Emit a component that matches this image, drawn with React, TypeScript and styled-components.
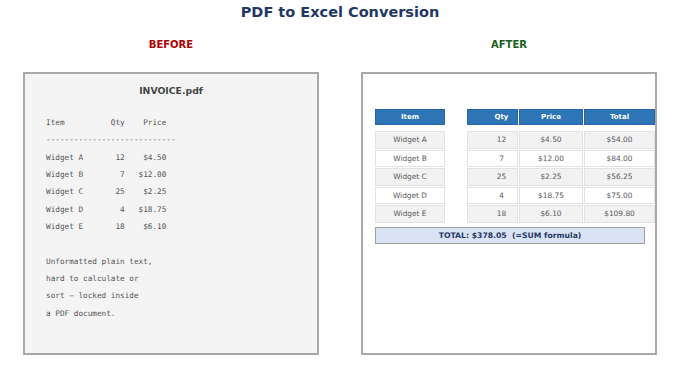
import React from 'react';
import styled, { createGlobalStyle } from 'styled-components';

const GlobalStyle = createGlobalStyle`
    html, body {
        margin: 0;
        padding: 0;
        background: #FFFFFF;
        font-family: "DejaVu Sans", "Liberation Sans", sans-serif;
    }
`;

const Page = styled.main`
    width: 680px;
    height: 377px;
    overflow: hidden;
`;

const Title = styled.h1`
    margin: 0;
    height: 24px;
    line-height: 24px;
    text-align: center;
    font-size: 14.5px;
    font-weight: bold;
    color: #1F3864;
`;

const Columns = styled.div`
    display: grid;
    grid-template-columns: 296px 296px;
    column-gap: 42px;
    padding-left: 23px;
`;

const SideLabel = styled.div<{ $tone: string }>`
    margin-top: 14px;
    height: 14px;
    line-height: 14px;
    text-align: center;
    font-size: 10px;
    font-weight: bold;
    color: ${p => p.$tone};
`;

const Panel = styled.section<{ $shade?: boolean }>`
    box-sizing: border-box;
    margin-top: 20px;
    height: 283px;
    border: 2px solid #A8A8A8;
    background-color: ${p => (p.$shade ? '#F4F4F4' : '#FFFFFF')};
`;

const PdfPanel = styled(Panel)`
    padding: 9px 0 0 21px;
`;

const FileName = styled.h2`
    margin: 0 0 0 -21px;
    height: 16px;
    line-height: 16px;
    text-align: center;
    font-size: 9.3px;
    font-weight: bold;
    color: #444444;
`;

const PlainText = styled.pre`
    margin: 15px 0 0;
    font-family: "DejaVu Sans Mono", "Liberation Mono", monospace;
    font-size: 7.7px;
    line-height: 17.33px;
    color: #555555;
`;

const SheetPanel = styled(Panel)`
    padding: 35px 0 0 12px;
`;

const Sheet = styled.div`
    display: flex;
    flex-direction: column;
    gap: 1px;
    width: 282px;
`;

const Row = styled.div<{ $head?: boolean }>`
    display: grid;
    grid-template-columns: 71px 21px 52px 65px 72px;
    height: ${p => (p.$head ? '16px' : '17.5px')};
    margin-bottom: ${p => (p.$head ? '5px' : '0')};
`;

const Cell = styled.div<{ $head?: boolean; $alt?: boolean; $indent?: number }>`
    box-sizing: border-box;
    display: flex;
    align-items: center;
    justify-content: center;
    padding-left: ${p => p.$indent ?? 0}px;
    margin-right: 1px;
    font-size: ${p => (p.$head ? '7px' : '7.4px')};
    font-weight: ${p => (p.$head ? 'bold' : 'normal')};
    color: ${p => (p.$head ? '#FFFFFF' : '#595959')};
    background-color: ${p => (p.$head ? '#2E75B6' : p.$alt ? '#F2F2F2' : '#FFFFFF')};
    border: 1px solid ${p => (p.$head ? '#2565A3' : '#E2E2E2')};
`;

const Spacer = styled.div``;

const TotalBar = styled.div`
    box-sizing: border-box;
    margin-top: 3px;
    width: 270px;
    height: 17px;
    display: flex;
    align-items: center;
    justify-content: center;
    white-space: pre;
    font-size: 7.7px;
    font-weight: bold;
    color: #1F3864;
    background-color: #DAE3F3;
    border: 1px solid #A0A0A0;
`;

const lines = [
    'Item          Qty    Price',
    '----------------------------',
    'Widget A       12    $4.50',
    'Widget B        7   $12.00',
    'Widget C       25    $2.25',
    'Widget D        4   $18.75',
    'Widget E       18    $6.10',
    '',
    'Unformatted plain text,',
    'hard to calculate or',
    'sort \u2014 locked inside',
    'a PDF document.',
];

const items = [
    { name: 'Widget A', qty: 12, price: '$4.50', total: '$54.00' },
    { name: 'Widget B', qty: 7, price: '$12.00', total: '$84.00' },
    { name: 'Widget C', qty: 25, price: '$2.25', total: '$56.25' },
    { name: 'Widget D', qty: 4, price: '$18.75', total: '$75.00' },
    { name: 'Widget E', qty: 18, price: '$6.10', total: '$109.80' },
];

export default function App() {
    return (
        <Page>
            <GlobalStyle />
            <Title>PDF to Excel Conversion</Title>
            <Columns>
                <SideLabel $tone="#B00000">BEFORE</SideLabel>
                <SideLabel $tone="#1A5C1A">AFTER</SideLabel>
                <PdfPanel $shade>
                    <FileName>INVOICE.pdf</FileName>
                    <PlainText>{lines.join('\n')}</PlainText>
                </PdfPanel>
                <SheetPanel>
                    <Sheet>
                        <Row $head>
                            <Cell $head>Item</Cell>
                            <Spacer />
                            <Cell $head $indent={18}>Qty</Cell>
                            <Cell $head>Price</Cell>
                            <Cell $head>Total</Cell>
                        </Row>
                        {items.map((it, i) => (
                            <Row key={it.name}>
                                <Cell $alt={i % 2 === 0}>{it.name}</Cell>
                                <Spacer />
                                <Cell $alt={i % 2 === 0} $indent={18}>{it.qty}</Cell>
                                <Cell $alt={i % 2 === 0}>{it.price}</Cell>
                                <Cell $alt={i % 2 === 0}>{it.total}</Cell>
                            </Row>
                        ))}
                        <TotalBar>TOTAL: $378.05  (=SUM formula)</TotalBar>
                    </Sheet>
                </SheetPanel>
            </Columns>
        </Page>
    );
}
